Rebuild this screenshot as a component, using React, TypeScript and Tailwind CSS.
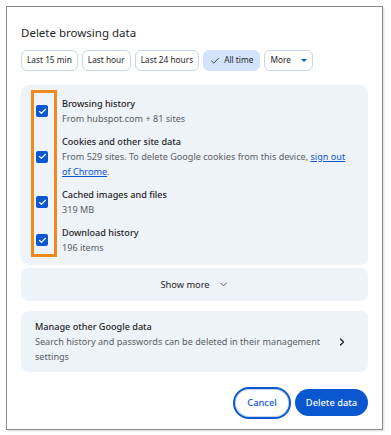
import { Check, ChevronDown, ChevronRight } from "lucide-react";

const ranges = ["Last 15 min", "Last hour", "Last 24 hours", "All time", "More"];

const items = [
  { title: "Browsing history", sub: "From hubspot.com + 81 sites" },
  { title: "Cookies and other site data", sub: null },
  { title: "Cached images and files", sub: "319 MB" },
  { title: "Download history", sub: "196 items" },
];

function Box() {
  return (
    <span className="flex h-[12px] w-[12px] shrink-0 items-center justify-center rounded-[2px] bg-[#0b57d0]">
      <Check size={9} strokeWidth={3} className="text-white" />
    </span>
  );
}

export default function App() {
  return (
    <div className="h-[435px] w-[391px] bg-white pl-[6px] pt-[6px] font-['Noto_Sans',sans-serif] text-[#1f1f1f]">
      <div className="flex h-[424px] w-[377px] flex-col border border-[#8a8a8a] px-[14px] shadow-[1px_1px_2px_rgba(0,0,0,0.15)]">
        <h2 className="pt-[16px] text-[11.5px] leading-[20px]">Delete browsing data</h2>

        <div className="mt-[7px] flex gap-[4px]">
          {ranges.map((r) => {
            const on = r === "All time";
            return (
              <span
                key={r}
                className={`flex h-[21px] items-center gap-[4px] whitespace-nowrap rounded-[6px] border text-[8.3px] ${
                  on ? "border-[#d3e3fd] bg-[#d3e3fd] px-[6px]" : "border-[#c8d5ea] bg-white px-[5px]"
                }`}
              >
                {on && <Check size={10} strokeWidth={2} />}
                {r}
                {r === "More" && (
                  <span className="ml-[6px] h-0 w-0 border-x-[3px] border-t-[3px] border-x-transparent border-t-[#0b57d0]" />
                )}
              </span>
            );
          })}
        </div>

        <div className="relative mt-[14px] flex flex-col gap-[8px] rounded-[8px] bg-[#eef2f9] pb-[10px] pl-[15px] pr-[10px] pt-[11px]">
          <div className="pointer-events-none absolute left-[10px] top-[5px] h-[167px] w-[26px] border-[3px] border-[#f08a1c]" />
          {items.map((it) => (
            <div key={it.title} className="flex items-center gap-[14px]">
              <Box />
              <div className="text-[9.1px] leading-[15px]">
                <div className="font-medium">{it.title}</div>
                <div className="text-[#5b5e63]">
                  {it.sub ?? (
                    <>
                      <span className="whitespace-nowrap">
                        From 529 sites. To delete Google cookies from this device,{" "}
                        <span className="text-[#0b57d0] underline">sign out</span>
                      </span>
                      <br />
                      <span className="text-[#0b57d0] underline">of Chrome</span>.
                    </>
                  )}
                </div>
              </div>
            </div>
          ))}
        </div>

        <div className="mt-[3px] flex h-[33px] items-center justify-center gap-[8px] rounded-[8px] bg-[#eef2f9] text-[9.3px]">
          Show more
          <ChevronDown size={11} strokeWidth={2} className="text-[#444]" />
        </div>

        <div className="mt-[10px] flex items-center rounded-[8px] bg-[#eef2f9] py-[8px] pl-[14px] pr-[20px]">
          <div className="flex-1 text-[9.1px] leading-[15px]">
            <div className="font-medium">Manage other Google data</div>
            <div className="text-[#5b5e63]">
              <span className="whitespace-nowrap">
                Search history and passwords can be deleted in their management
              </span>
              <br />
              settings
            </div>
          </div>
          <ChevronRight size={12} strokeWidth={2.5} />
        </div>

        <div className="mt-[15px] flex justify-end gap-[4px]">
          <button className="flex h-[32px] w-[58px] items-center justify-center rounded-full border-2 border-[#0b57d0] bg-white text-[9.3px] font-medium text-[#0b57d0] ring-1 ring-inset ring-[#c8d5ea]">
            Cancel
          </button>
          <button className="mt-[2px] flex h-[27px] w-[73px] items-center justify-center rounded-full bg-[#0b57d0] text-[9.3px] font-medium text-white">
            Delete data
          </button>
        </div>
      </div>
    </div>
  );
}
